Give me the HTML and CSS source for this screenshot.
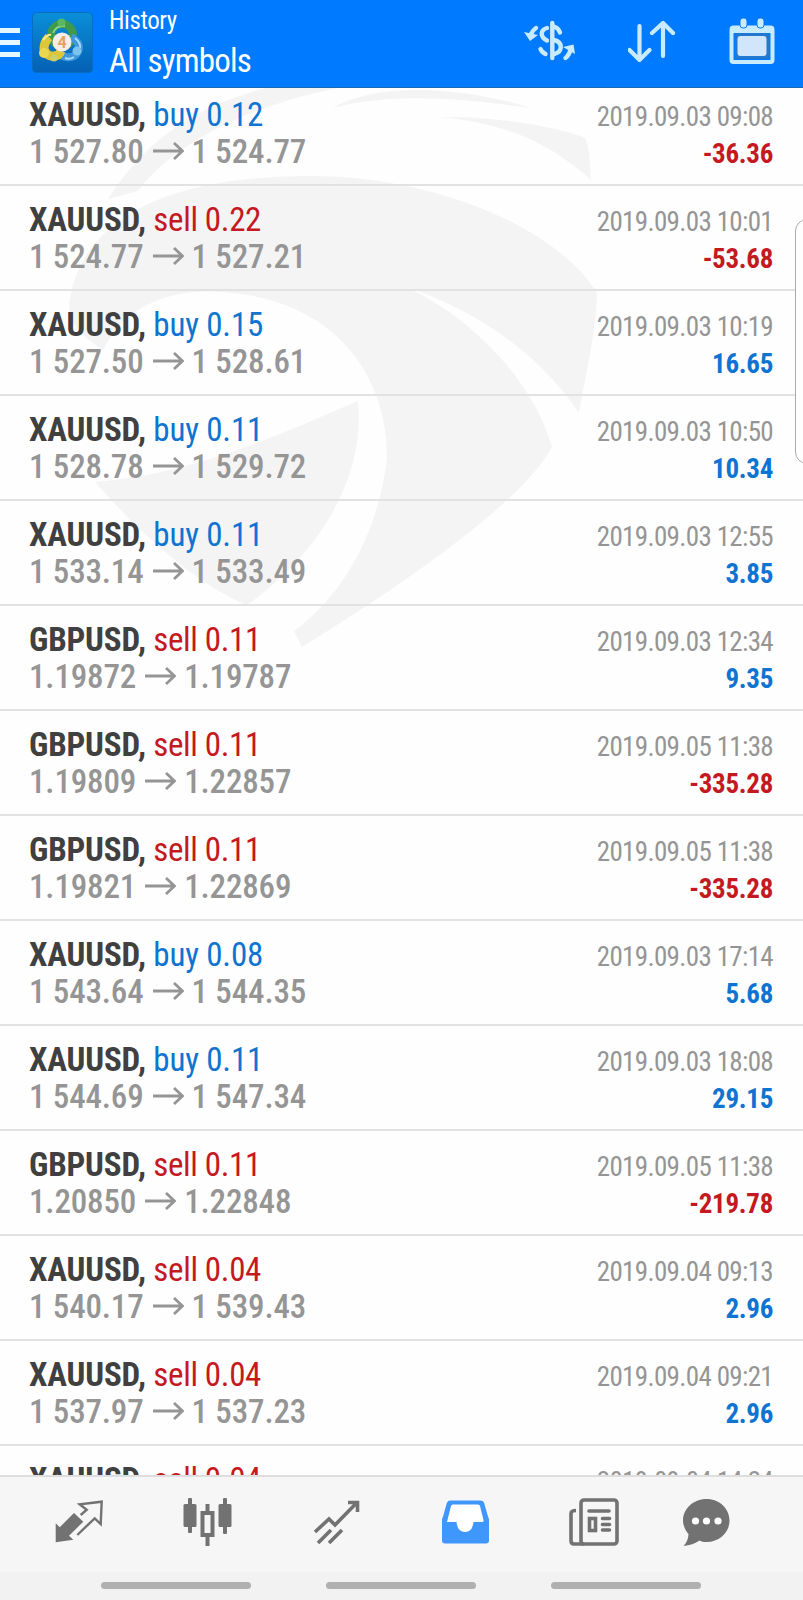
FILE: index.html
```
<!DOCTYPE html>
<html lang="en">
<head>
    <meta charset="UTF-8">
    <title>History</title>
    <link rel="stylesheet" href="styles.css">
</head>
<body>

<header class="topbar">
    <div class="burger"><span></span><span></span><span></span></div>
    <svg class="logo" width="61" height="61" viewBox="0 0 61 61">
        <defs>
            <linearGradient id="tile" x1="0" y1="0" x2="0" y2="1">
                <stop offset="0" stop-color="#0a8fd8"/>
                <stop offset="1" stop-color="#0560b4"/>
            </linearGradient>
        </defs>
        <rect x="0.5" y="0.5" width="60" height="60" rx="4" fill="url(#tile)" stroke="#0a6cc0"/>
        <circle cx="30" cy="23" r="11" fill="none" stroke="#3f9a4c" stroke-width="8"/>
        <path d="M21 21q3-8 12-7" fill="none" stroke="#8fd08a" stroke-width="2"/>
        <circle cx="29.500" cy="10.500" r="4" fill="#5cb860"/>
        <path d="M39 25q8 4 8 11-2 9-9 9-7 1-10-4" fill="none" stroke="#3f97dc" stroke-width="8"/>
        <path d="M43 26q6 5 5 10M33 46q5 2 9-1" fill="none" stroke="#a8dcf8" stroke-width="2"/>
        <circle cx="45" cy="39" r="4.500" fill="#7cc3f0"/>
        <path d="M17 25q-5 5-5 12 3 8 10 7 5 0 7-5" fill="none" stroke="#dcc63a" stroke-width="9"/>
        <path d="M11 28q5-6 8-5" fill="none" stroke="#f6ec9a" stroke-width="2"/>
        <circle cx="12" cy="41" r="5" fill="#ecd850"/>
        <circle cx="22" cy="46" r="3.500" fill="#c9cf6a"/>
        <circle cx="30" cy="30" r="9.500" fill="#f6eee6"/>
        <text x="30" y="36" class="logo-num">4</text>
    </svg>
    <div class="heading">
        <div class="sub">History</div>
        <div class="main">All symbols</div>
    </div>
    <div class="actions">
        <svg width="52" height="44" viewBox="0 0 52 44" fill="none" stroke="#c9ebff" stroke-width="4.400" stroke-linecap="round">
            <path d="M29.300 5v35"/>
            <path d="M24 10c-7 2-7 9 0 12.500M17.500 31c1 3 3 4 5 5M31 8.500c3 1 5 3 6 6M31 22c9 2 9 12 0 14"/>
            <path d="M13 10c-3 2-4 4-5 6M42.500 40c3-2 4-5 5-8"/>
            <path d="M1 14l6 9 8-6zM40 29l10.500-2.500L52 36z" fill="#c9ebff" stroke="none"/>
        </svg>
        <svg width="48" height="44" viewBox="0 0 48 44" fill="none" stroke="#c9ebff" stroke-width="4.200" stroke-linecap="round" stroke-linejoin="round">
            <path d="M11.500 8v34M1.500 32l10 10 10-10M35 38V5M24 15L35 5l10 10"/>
        </svg>
        <svg width="46" height="46" viewBox="0 0 46 46">
            <rect x="2.500" y="9.500" width="41" height="34.500" rx="2" fill="none" stroke="#c9ebff" stroke-width="4"/>
            <path d="M2 8h42v7H2z" fill="#c9ebff"/>
            <rect x="6" y="15" width="34" height="26" rx="3" fill="#2277cf"/>
            <rect x="11" y="0" width="7" height="10" rx="3" fill="#c9ebff" stroke="#0a7cf5"/>
            <rect x="28" y="0" width="7" height="10" rx="3" fill="#c9ebff" stroke="#0a7cf5"/>
            <rect x="8.500" y="18" width="29" height="20" rx="3" fill="#d2e6fb"/>
        </svg>
    </div>
</header>

<main class="history">
    <svg class="watermark" width="803" height="600" viewBox="0 88 803 600" fill="#f4f4f4">
        <path d="M69 305C75 251 120 176 310 176C440 176 560 231 597 293C596 331 588 363 579 413C545 363 490 315 404 286C460 311 530 371 552 447C530 490 440 562 302 647L294 631C350 590 380 522 387 458C388 387 345 299 220 292C165 288 120 311 103 351C90 339 70 331 69 305z"/>
        <path d="M358 401C365 466 330 546 247 605C190 582 130 522 95 482C190 474 270 439 358 401z"/>
        <path d="M108 199C150 132 215 92 310 80H390C250 96 170 148 138 191z"/>
        <path d="M332 108C380 80 470 88 530 108C480 101 400 90 332 108z"/>
        <path d="M440 117C500 116 560 128 585 138C590 148 590 168 591 180C550 144 510 124 440 117z"/>
    </svg>
    <div id="deals"></div>
    <div class="edge-panel"></div>
</main>

<nav class="tabs">
    <svg width="48" height="44" viewBox="0 0 48 44" fill="#727272">
        <path d="M.7 23.300l4 4L19 13l9.300 8.700L14 35.700l4.300 4L.7 42.300z"/>
        <path d="M25.700 15l6-5.300-7-5.400 22-2.600-1 22.300-6-5.700L22.300 35" fill="none" stroke="#727272" stroke-width="2.400"/>
    </svg>
    <svg width="50" height="48" viewBox="0 0 50 48" fill="#727272">
        <rect x="0.500" y="6" width="13" height="23" rx="1.500"/><rect x="5" y="0" width="4" height="35" rx="1"/>
        <rect x="35.500" y="6" width="13" height="23" rx="1.500"/><rect x="40" y="0" width="4" height="36" rx="1"/>
        <rect x="22.500" y="6" width="4" height="8"/><rect x="22.500" y="37" width="4" height="11"/>
        <rect x="19.500" y="15" width="10" height="22" fill="none" stroke="#727272" stroke-width="4"/>
    </svg>
    <svg width="48" height="46" viewBox="0 0 48 46" fill="none" stroke="#727272" stroke-width="3.600">
        <path d="M2 33l14-13 6 6L43.500 4M35 3.500h9.500V13M5 44l13-13M16 44l13-13"/>
    </svg>
    <svg width="48" height="44" viewBox="0 0 48 44">
        <path d="M9 0.500h30q3 0 4 2l4 14q1 2 1 4v20q0 3-3 3H4q-3 0-3-3v-20q0-2 1-4L6 2.500q1-2 3-2z" fill="#3f97fb"/>
        <path d="M12 4.500h25q1.500 0 2 1.500l3.500 14q.5 2-1.500 2h-8.500q-1 10-8.500 10t-8.500-10H6l4-16q.5-1.500 2-1.500z" fill="#fff"/>
    </svg>
    <svg width="50" height="48" viewBox="0 0 50 48" fill="none" stroke="#727272" stroke-width="3.600">
        <rect x="12" y="2" width="36" height="44" rx="3"/>
        <path d="M7 12.500q-5 0-5 3v27q0 3.500 3 3.500h10" />
        <path d="M20 13h20M33.500 20.500h7M33.500 26.500h7M33.500 32h7" stroke-linecap="round"/>
        <rect x="20.500" y="20.500" width="6" height="12"/>
    </svg>
    <svg width="48" height="48" viewBox="0 0 48 48">
        <path d="M24.500 1C38 1 47.500 11 47.500 22.500S38 44 24.500 44c-3 0-5-.500-7-1.500-4 3-10 5-16 5.500 3-3 5-8 5-12C3 32 1 27 1 22.500 1 11 11 1 24.500 1z" fill="#727272"/>
        <g fill="#fff"><circle cx="13.500" cy="23" r="3.600"/><circle cx="24.500" cy="23" r="3.600"/><circle cx="36" cy="23" r="3.600"/></g>
    </svg>
</nav>

<footer class="gestures"><i></i><i></i><i></i></footer>

<script src="script.js"></script>
</body>
</html>
```
FILE: styles.css
```
body {
    margin: 0;
    height: 1600px;
    display: flex;
    flex-direction: column;
    overflow: hidden;
    background: #fefefe;
    font-family: "Roboto Condensed", Roboto, sans-serif;
    font-stretch: 75%;
}

/* top bar */
.topbar {
    box-sizing: border-box;
    height: 88px;
    flex: none;
    display: flex;
    align-items: flex-start;
    background: #007aff;
    border-bottom: 1px solid #1a6bb5;
    color: #fff;
}
.burger { width: 20px; margin: 28px 12px 0 0; display: flex; flex-direction: column; gap: 7px; }
.burger span { height: 5px; background: #e6f8ff; }
.logo { margin-top: 12px; }
.logo-num { font: bold 16px Roboto, sans-serif; fill: #e8a060; text-anchor: middle; }
.heading { margin-left: 16px; white-space: nowrap; }
.sub { font-size: 25px; line-height: 30px; margin-top: 6px; letter-spacing: -0.4px; }
.main { font-size: 33px; line-height: 40px; margin-top: 5px; letter-spacing: -0.8px; }
.actions { margin-left: auto; margin-right: 28px; display: flex; gap: 53px; padding-top: 18px; }

/* deal list */
.history { position: relative; flex: none; height: 1387px; overflow: hidden; }
.watermark { position: absolute; left: 0; top: 0; }
#deals { position: relative; margin-top: -7px; }
.deal {
    box-sizing: border-box;
    height: 105px;
    padding: 15px 30px 0 29px;
    border-bottom: 2px solid #e2e2e2;
    display: flex;
    justify-content: space-between;
    white-space: nowrap;
}
.deal div div { height: 37px; line-height: 37px; }
.symbol { font-size: 33px; letter-spacing: -0.17px; }
.symbol b { color: #404040; }
.symbol .sell { letter-spacing: -0.35px; }
.price { font-size: 33px; font-weight: 500; color: #959595; letter-spacing: -0.15px; }
.price svg { margin: 0 8px 2px 9px; }
.right { text-align: right; padding-top: 3px; }
.date { font-size: 27px; color: #959595; letter-spacing: -0.65px; }
.profit { font-size: 27px; font-weight: bold; letter-spacing: -0.3px; }
.buy { color: #0f74d1; }
.sell { color: #c4191f; }
.edge-panel {
    position: absolute;
    right: -20px;
    top: 131px;
    width: 26px;
    height: 243px;
    border: 1px solid #aaa;
    border-radius: 12px;
    background: #fefefe;
}

/* bottom bar */
.tabs {
    box-sizing: border-box;
    height: 97px;
    flex: none;
    border-top: 2px solid #dedede;
    background: #f6f6f6;
    display: flex;
    align-items: center;
    gap: 80px;
    padding: 0 0 5px 55px;
}
.tabs svg:last-child { margin-left: -17px; }
.gestures {
    flex: 1;
    background: #f2f2f2;
    display: flex;
    gap: 75px;
    padding: 10px 0 0 101px;
}
.gestures i { width: 150px; height: 7px; border-radius: 4px; background: #b0b0b0; }
```
FILE: script.js
```
const deals = [
    ["XAUUSD", "buy", "0.12", "1 527.80", "1 524.77", "2019.09.03 09:08", "-36.36"],
    ["XAUUSD", "sell", "0.22", "1 524.77", "1 527.21", "2019.09.03 10:01", "-53.68"],
    ["XAUUSD", "buy", "0.15", "1 527.50", "1 528.61", "2019.09.03 10:19", "16.65"],
    ["XAUUSD", "buy", "0.11", "1 528.78", "1 529.72", "2019.09.03 10:50", "10.34"],
    ["XAUUSD", "buy", "0.11", "1 533.14", "1 533.49", "2019.09.03 12:55", "3.85"],
    ["GBPUSD", "sell", "0.11", "1.19872", "1.19787", "2019.09.03 12:34", "9.35"],
    ["GBPUSD", "sell", "0.11", "1.19809", "1.22857", "2019.09.05 11:38", "-335.28"],
    ["GBPUSD", "sell", "0.11", "1.19821", "1.22869", "2019.09.05 11:38", "-335.28"],
    ["XAUUSD", "buy", "0.08", "1 543.64", "1 544.35", "2019.09.03 17:14", "5.68"],
    ["XAUUSD", "buy", "0.11", "1 544.69", "1 547.34", "2019.09.03 18:08", "29.15"],
    ["GBPUSD", "sell", "0.11", "1.20850", "1.22848", "2019.09.05 11:38", "-219.78"],
    ["XAUUSD", "sell", "0.04", "1 540.17", "1 539.43", "2019.09.04 09:13", "2.96"],
    ["XAUUSD", "sell", "0.04", "1 537.97", "1 537.23", "2019.09.04 09:21", "2.96"],
    ["XAUUSD", "sell", "0.04", "", "", "2019.09.04 14:24", ""]
];

const arrow = '<svg width="31" height="20" viewBox="0 0 31 20" fill="none" stroke="#959595" stroke-width="2.800"><path d="M0 10h29M21 2l8.500 8-8.500 8"/></svg>';

document.getElementById("deals").innerHTML = deals.map(([symbol, side, lots, open, close, date, profit]) => `
    <div class="deal">
        <div class="left">
            <div class="symbol"><b>${symbol},</b> <span class="${side}">${side} ${lots}</span></div>
            <div class="price">${open}${arrow}${close}</div>
        </div>
        <div class="right">
            <div class="date">${date}</div>
            <div class="profit ${profit < 0 ? "sell" : "buy"}">${profit}</div>
        </div>
    </div>`).join("");
```
